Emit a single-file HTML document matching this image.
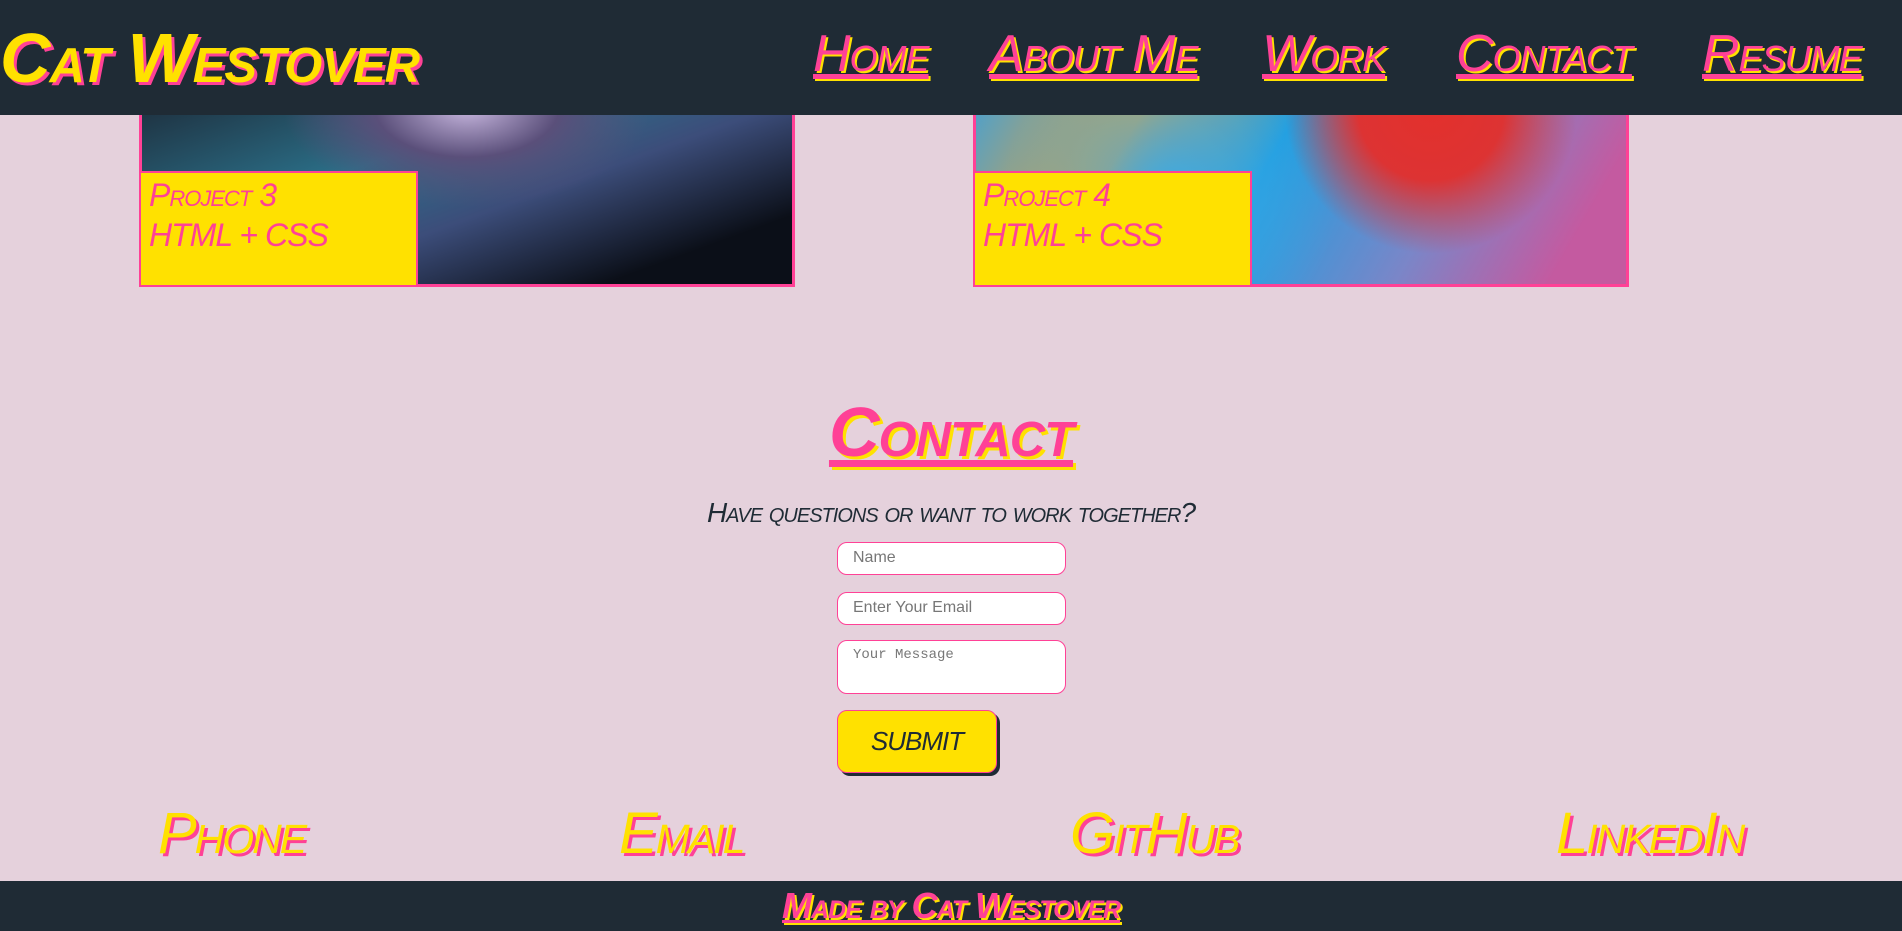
<!DOCTYPE html>
<html><head><meta charset="utf-8"><style>
*{margin:0;padding:0;box-sizing:border-box}
body{width:1902px;height:931px;background:#e5d1dc;position:relative;overflow:hidden;font-family:"Liberation Sans Narrow","Liberation Sans",sans-serif}
.hand{font-variant:small-caps;font-style:italic;letter-spacing:-1px}
header{position:absolute;left:0;top:0;width:1902px;height:115px;background:#1f2b35;z-index:2}
.logo{position:absolute;left:0;top:18px;font-size:70px;color:#ffe100;text-shadow:3px 3px 0 #ff4196;font-weight:bold}
nav a{position:absolute;top:24px;font-size:52px;color:#ff4196;text-shadow:2px 2px 0 #ffe100;text-decoration:underline;white-space:nowrap}
.card{position:absolute;top:60px;height:227px;width:656px;border:3px solid #ff4196}
.c1{left:139px;background:radial-gradient(ellipse at 50% 20%,#c9b8e0 0,#5a4f7a 20%,transparent 40%),linear-gradient(160deg,#1a1e2a,#2b6f88 40%,#3c4d7a 60%,#0b0f18 85%)}
.c2{left:973px;background:radial-gradient(circle at 70% 20%,#e3302c 0,#d33 15%,transparent 30%),radial-gradient(circle at 30% 60%,#3ba9e6 0,transparent 35%),linear-gradient(120deg,#3aa0de,#e4a33c 25%,#1e9ee0 45%,#7a86c8 70%,#c45aa0 90%)}
.lab{position:absolute;left:-3px;bottom:-3px;width:279px;height:116px;background:#ffe100;border:2px solid #ff4196;color:#ff4196;font-size:32px;padding:2px 8px;line-height:40px}
h2{position:absolute;left:0;width:1902px;top:392px;text-align:center;font-size:70px;color:#ff4196;text-shadow:3px 3px 0 #ffe100;text-decoration:underline}
.sub{position:absolute;left:0;width:1902px;top:497px;text-align:center;font-size:28px;color:#1f2b35}
.in{position:absolute;left:837px;width:229px;background:#fff;border:1px solid #ff4196;border-radius:10px;font-family:"Liberation Sans",sans-serif;font-size:16px;color:#777;padding:6px 15px}
.sb{position:absolute;left:837px;top:710px;width:160px;height:63px;background:#ffe100;border:1px solid #ff4196;border-radius:10px;box-shadow:3px 3px 0 #1f2b35;text-align:center;line-height:60px;font-size:26px;color:#1f2b35}
.ct{position:absolute;top:800px;font-size:58px;color:#ffe100;text-shadow:3px 3px 0 #ff4196;letter-spacing:-2px}
footer{position:absolute;left:0;top:881px;width:1902px;height:50px;background:#1f2b35;text-align:center}
footer span{font-size:36px;color:#ff4196;text-shadow:2px 2px 0 #ffe100;text-decoration:underline;line-height:50px;font-weight:bold}
</style></head><body>
<header><div class="logo hand">Cat Westover</div>
<nav class="hand"><a style="left:813px">Home</a><a style="left:989px">About Me</a><a style="left:1262px">Work</a><a style="left:1456px">Contact</a><a style="left:1702px">Resume</a></nav></header>
<div class="card c1"><div class="lab hand">Project 3<br>HTML + CSS</div></div>
<div class="card c2"><div class="lab hand">Project 4<br>HTML + CSS</div></div>
<h2 class="hand">Contact</h2>
<div class="sub hand">Have questions or want to work together?</div>
<div class="in" style="top:542px;height:33px">Name</div>
<div class="in" style="top:592px;height:33px">Enter Your Email</div>
<div class="in" style="top:640px;height:54px;font-family:'Liberation Mono',monospace;font-size:14px">Your Message</div>
<div class="sb hand">SUBMIT</div>
<div class="ct hand" style="left:158px">Phone</div>
<div class="ct hand" style="left:619px">Email</div>
<div class="ct hand" style="left:1070px">GitHub</div>
<div class="ct hand" style="left:1556px">LinkedIn</div>
<footer><span class="hand">Made by Cat Westover</span></footer>
</body></html>
